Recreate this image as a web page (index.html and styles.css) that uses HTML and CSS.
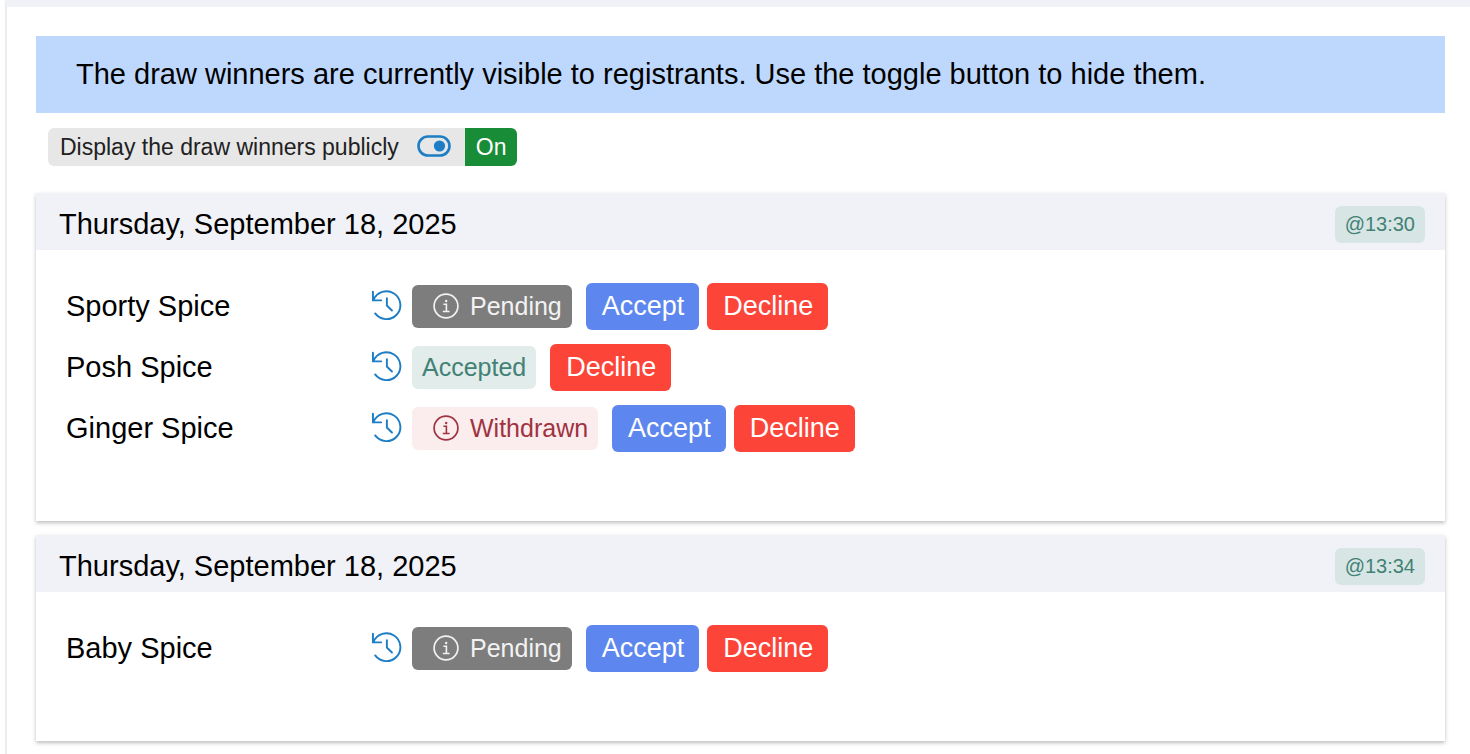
FILE: index.html
```html
<!DOCTYPE html>
<html lang="en">
<head>
<meta charset="utf-8">
<meta name="viewport" content="width=device-width, initial-scale=1">
<title>Draw winners</title>
<link rel="stylesheet" href="styles.css">
</head>
<body>
<svg class="sprite" aria-hidden="true">
  <symbol id="history" viewBox="0 0 32 32">
    <path d="M2 1.7v9h8.5M2.6 10.2A14.4 14.4 0 1 1 4.3 24.2M16.4 8.4v7.6l5.2 5.2" fill="none" stroke="currentColor" stroke-width="2" stroke-linecap="round" stroke-linejoin="miter"/>
  </symbol>
  <symbol id="info" viewBox="0 0 26 26">
    <circle cx="13" cy="13" r="11.9" fill="none" stroke="currentColor" stroke-width="1.7"/>
    <path d="M10.4 11.3h3v7.2M9.8 18.5h6.8" fill="none" stroke="currentColor" stroke-width="1.6"/>
    <circle cx="13.2" cy="8" r="1.2" fill="currentColor"/>
  </symbol>
  <symbol id="toggle" viewBox="0 0 34 22">
    <rect x="1.5" y="1.5" width="31" height="19" rx="9.5" fill="none" stroke="currentColor" stroke-width="2.6"/>
    <circle cx="22.5" cy="11" r="5.6" fill="currentColor"/>
  </symbol>
</svg>
<main class="panel">
  <p class="notice">The draw winners are currently visible to registrants. Use the toggle button to hide them.</p>
  <div class="visibility">
    <button class="visibility-toggle" type="button">Display the draw winners publicly <svg class="toggle-icon" aria-hidden="true"><use href="#toggle"/></svg></button>
    <span class="visibility-state">On</span>
  </div>
  <section class="card">
    <header class="card-header"><h2 class="card-title">Thursday, September 18, 2025</h2><span class="time">@13:30</span></header>
    <ul class="winners">
      <li class="winner">
        <span class="name">Sporty Spice</span>
        <button class="history" type="button" aria-label="History"><svg class="history-icon"><use href="#history"/></svg></button>
        <span class="status pending"><svg class="info-icon" aria-hidden="true"><use href="#info"/></svg>Pending</span>
        <span class="actions"><button class="action accept" type="button">Accept</button><button class="action decline" type="button">Decline</button></span>
      </li>
      <li class="winner">
        <span class="name">Posh Spice</span>
        <button class="history" type="button" aria-label="History"><svg class="history-icon"><use href="#history"/></svg></button>
        <span class="status accepted">Accepted</span>
        <span class="actions"><button class="action decline" type="button">Decline</button></span>
      </li>
      <li class="winner">
        <span class="name">Ginger Spice</span>
        <button class="history" type="button" aria-label="History"><svg class="history-icon"><use href="#history"/></svg></button>
        <span class="status withdrawn"><svg class="info-icon" aria-hidden="true"><use href="#info"/></svg>Withdrawn</span>
        <span class="actions"><button class="action accept" type="button">Accept</button><button class="action decline" type="button">Decline</button></span>
      </li>
    </ul>
  </section>
  <section class="card">
    <header class="card-header"><h2 class="card-title">Thursday, September 18, 2025</h2><span class="time">@13:34</span></header>
    <ul class="winners">
      <li class="winner">
        <span class="name">Baby Spice</span>
        <button class="history" type="button" aria-label="History"><svg class="history-icon"><use href="#history"/></svg></button>
        <span class="status pending"><svg class="info-icon" aria-hidden="true"><use href="#info"/></svg>Pending</span>
        <span class="actions"><button class="action accept" type="button">Accept</button><button class="action decline" type="button">Decline</button></span>
      </li>
    </ul>
  </section>
</main>
</body>
</html>
```
FILE: styles.css
```css
* { box-sizing: border-box; }
body {
  margin: 0;
  background: #fff;
  color: #000;
  font-family: "Liberation Sans", Arial, sans-serif;
  font-size: 29px;
}
button { font-family: inherit; border: 0; cursor: pointer; }
.sprite { display: none; }
.panel {
  margin-left: 5px;
  padding: 29px 25px 12px 29px;
  border-top: 7px solid #f1f2f7;
  border-left: 2px solid #ececec;
  min-height: 100vh;
}
.notice {
  margin: 0;
  padding: 20px 40px 21px;
  background: #bed8fd;
  line-height: 36px;
}
.visibility {
  display: flex;
  width: fit-content;
  margin: 15px 12px 27px;
  font-size: 23px;
  line-height: 38px;
  border-radius: 6px;
  overflow: hidden;
}
.visibility-toggle {
  display: flex;
  align-items: center;
  gap: 18px;
  padding: 0 14px 0 12px;
  background: #e7e7e7;
  color: #212121;
  font-size: 23px;
  line-height: 38px;
}
.toggle-icon { width: 34px; height: 22px; margin-bottom: 2px; color: #1d7dc5; }
.visibility-state { padding: 0 11px; background: #198c37; color: #fff; }
.card {
  margin-bottom: 14px;
  background: #fff;
  box-shadow: 0 2px 4px rgba(0, 0, 0, .26);
}
.card-header {
  display: flex;
  justify-content: space-between;
  align-items: center;
  padding: 11px 20px 6px 23px;
  background: #f1f2f7;
}
.card-title { margin: 0; font-size: 29px; font-weight: 400; line-height: 40px; }
.time {
  padding: 0 10px;
  border-radius: 6px;
  background: #d7e6e4;
  color: #428175;
  font-size: 20px;
  line-height: 37px;
}
.winners {
  display: flex;
  flex-direction: column;
  gap: 14px;
  margin: 0;
  padding: 33px 30px 69px;
  list-style: none;
}
.winner { display: flex; align-items: center; }
.name { width: 305px; }
.history { display: flex; padding: 0 0 2px; margin-right: 10px; background: none; color: #1d7dc5; }
.history-icon { width: 31px; height: 31px; }
.status {
  display: flex;
  align-items: center;
  gap: 11px;
  padding: 0 10px;
  margin-right: 14px;
  border-radius: 6px;
  font-size: 25px;
  line-height: 43px;
}
.info-icon { width: 26px; height: 26px; margin: 0 0 2px 11px; }
.pending { background: #7d7d7d; color: #f2f2f2; }
.accepted { background: #e2ecea; color: #428175; }
.withdrawn { background: #fbecee; color: #a03340; }
.actions { display: flex; gap: 8px; }
.action {
  padding: 0 15px 0 16px;
  border-radius: 6px;
  color: #fff;
  font-size: 27px;
  line-height: 47px;
}
.accept { background: #5d87ee; }
.decline { background: #fc4439; }
```
